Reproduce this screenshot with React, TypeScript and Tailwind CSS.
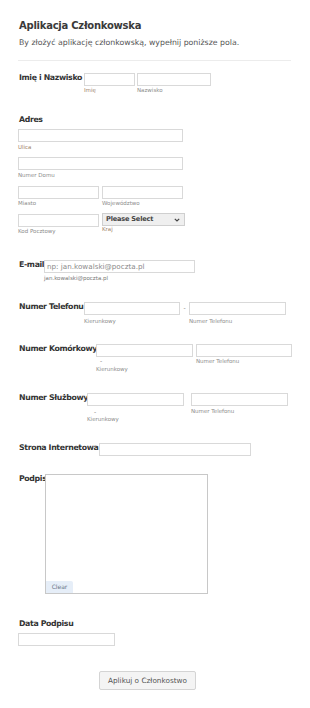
import React from "react";

const inp = "block h-[13px] border border-[#d9d9d9] bg-white";
const sub = "block whitespace-nowrap text-[5.5px] leading-[7px] text-[#8c8c8c]";
const subO = "block whitespace-nowrap text-[5.5px] leading-[7px] text-[#a0836a]";
const lab = "shrink-0 whitespace-nowrap text-[7.8px] font-bold leading-[10px] tracking-[-0.35px] text-[#333333]";

export default function App() {
  return (
    <div className="w-[310px] min-h-[708px] bg-white pl-[18px] pr-[19px] pt-[19px] font-['DejaVu_Sans','Verdana',sans-serif]">
      <h1 className="whitespace-nowrap pl-px text-[10px] font-bold leading-[13px] tracking-[-0.25px] text-[#3a3a3a]">Aplikacja Członkowska</h1>
      <p className="mt-[5px] whitespace-nowrap pl-px text-[7.8px] leading-[12px] text-[#555555]">
        By złożyć aplikację członkowską, wypełnij poniższe pola.
      </p>
      <div className="mt-[11px] border-t border-[#ececec]" />

      {/* Name */}
      <div className="mt-[12px] flex items-start">
        <span className={`${lab} w-[66px] pl-px`}>Imię i Nazwisko</span>
        <div className="w-[51px]">
          <div className={`${inp} w-[51px]`} />
          <span className={`${subO} mt-[1px]`}>Imię</span>
        </div>
        <div className="ml-[2px] w-[74px]">
          <div className={`${inp} w-[74px]`} />
          <span className={`${sub} mt-[1px]`}>Nazwisko</span>
        </div>
      </div>

      {/* Address */}
      <div className="mt-[21px]">
        <span className={`${lab} block pl-px`}>Adres</span>
        <div className={`${inp} mt-[4px] w-[165px]`} />
        <span className={`${subO} mt-[2px]`}>Ulica</span>
        <div className={`${inp} mt-[6px] w-[165px]`} />
        <span className={`${sub} mt-[2px]`}>Numer Domu</span>
        <div className="mt-[6.5px] flex">
          <div className="w-[81px]">
            <div className={`${inp} w-[81px]`} />
            <span className={`${sub} mt-[1.5px]`}>Miasto</span>
          </div>
          <div className="ml-[3px] w-[81px]">
            <div className={`${inp} w-[81px]`} />
            <span className={`${sub} mt-[1.5px]`}>Województwo</span>
          </div>
        </div>
        <div className="mt-[6.5px] flex items-start">
          <div className="w-[81px]">
            <div className={`${inp} w-[81px]`} />
            <span className={`${sub} mt-[1.5px]`}>Kod Pocztowy</span>
          </div>
          <div className="ml-[3px] -mt-[0.5px] w-[83px]">
            <div className="flex h-[13px] w-[83px] items-center justify-between border border-[#cfcfcf] bg-[#efefef] pl-[3px] pr-[4px]">
              <span className="whitespace-nowrap text-[6.6px] font-bold leading-none tracking-[-0.2px] text-[#444444]">Please Select</span>
              <svg width="6" height="4" viewBox="0 0 6 4">
                <path d="M0.8 0.8 L3 3 L5.2 0.8" fill="none" stroke="#444" strokeWidth="1.2" />
              </svg>
            </div>
            <span className={`${subO} mt-0`}>Kraj</span>
          </div>
        </div>
      </div>

      {/* Email */}
      <div className="mt-[25px] flex items-start">
        <span className={`${lab} w-[26px] pl-px`}>E-mail</span>
        <div className="w-[151px]">
          <div className={`${inp} flex w-[151px] items-center pl-[2px]`}>
            <span className="whitespace-nowrap text-[7.2px] leading-none text-[#8a8a8a]">np: jan.kowalski@poczta.pl</span>
          </div>
          <span className={`${sub} mt-[2px] text-[#777777]`}>jan.kowalski@poczta.pl</span>
        </div>
      </div>

      {/* Phone */}
      <div className="mt-[20px] flex items-start">
        <span className={`${lab} w-[66px] pl-px`}>Numer Telefonu</span>
        <div className="w-[96px]">
          <div className={`${inp} w-[96px]`} />
          <span className={`${sub} mt-[2.5px]`}>Kierunkowy</span>
        </div>
        <span className="mx-[2px] mt-[2px] w-[5px] text-center text-[6px] leading-[8px] text-[#777777]">-</span>
        <div className="w-[97px]">
          <div className={`${inp} w-[97px]`} />
          <span className={`${sub} mt-[2.5px]`}>Numer Telefonu</span>
        </div>
      </div>

      {/* Mobile */}
      <div className="mt-[19px] flex items-start">
        <span className={`${lab} w-[78px] pl-px`}>Numer Komórkowy</span>
        <div className="w-[97px]">
          <div className={`${inp} w-[97px]`} />
          <span className="block pl-[4px] text-[6px] leading-[8px] text-[#777777]">-</span>
          <span className={`${sub} mt-[1px]`}>Kierunkowy</span>
        </div>
        <div className="ml-[3px] w-[96px]">
          <div className={`${inp} w-[96px]`} />
          <span className={`${sub} mt-[1.5px]`}>Numer Telefonu</span>
        </div>
      </div>

      {/* Work */}
      <div className="mt-[20px] flex items-start">
        <span className={`${lab} w-[69px] pl-px`}>Numer Służbowy</span>
        <div className="w-[97px]">
          <div className={`${inp} w-[97px]`} />
          <span className="mt-[2px] block pl-[7px] text-[6px] leading-[8px] text-[#777777]">-</span>
          <span className={sub}>Kierunkowy</span>
        </div>
        <div className="ml-[7px] w-[97px]">
          <div className={`${inp} w-[97px]`} />
          <span className={`${sub} mt-[2px]`}>Numer Telefonu</span>
        </div>
      </div>

      {/* Website */}
      <div className="mt-[20.5px] flex items-start">
        <span className={`${lab} w-[81px] pl-px`}>Strona Internetowa</span>
        <div className={`${inp} w-[152px]`} />
      </div>

      {/* Signature */}
      <div className="mt-[18px] flex items-start">
        <span className={`${lab} w-[27px] pl-px`}>Podpis</span>
        <div className="relative h-[120px] w-[163px] border border-[#c8c8c8] bg-white">
          <div className="absolute bottom-0 left-0 flex h-[12px] w-[27px] items-center justify-center rounded-tr-[2px] bg-[#e6eef8]">
            <span className="text-[6px] leading-none text-[#6b7785]">Clear</span>
          </div>
        </div>
      </div>

      {/* Date */}
      <div className="mt-[25px]">
        <span className={`${lab} block pl-px`}>Data Podpisu</span>
        <div className={`${inp} mt-[4px] w-[97px]`} />
      </div>

      {/* Submit */}
      <div className="mt-[25px] pb-[19px]">
        <div className="ml-[81px] flex h-[19px] w-[97px] items-center justify-center rounded-[2px] border border-[#d4d4d4] bg-[#f4f4f4]">
          <span className="whitespace-nowrap text-[7.3px] leading-none text-[#555555]">Aplikuj o Członkostwo</span>
        </div>
      </div>
    </div>
  );
}
